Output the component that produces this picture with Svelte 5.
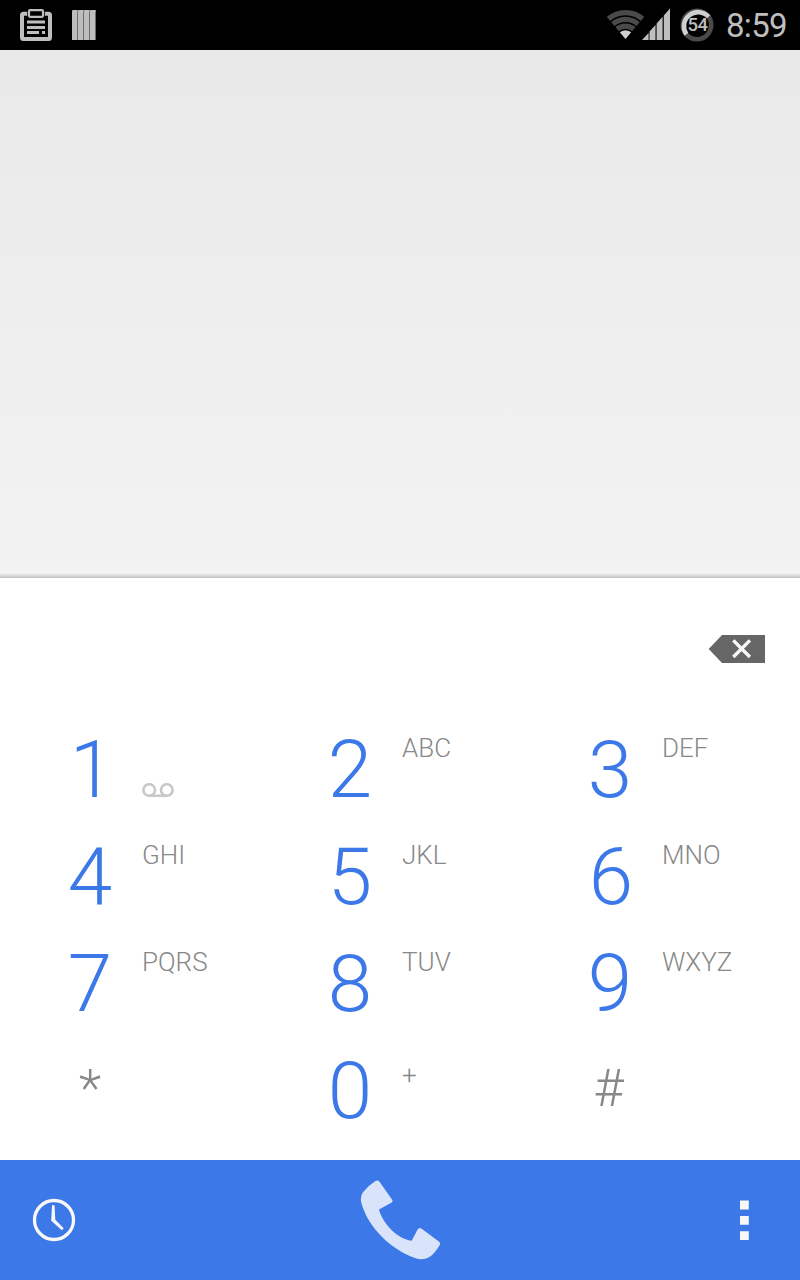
<script>
  const keys = [
    { digit: '1', voicemail: true, shift: 2 },
    { digit: '2', letters: 'ABC' },
    { digit: '3', letters: 'DEF' },
    { digit: '4', letters: 'GHI' },
    { digit: '5', letters: 'JKL' },
    { digit: '6', letters: 'MNO', shift: 1 },
    { digit: '7', letters: 'PQRS' },
    { digit: '8', letters: 'TUV' },
    { digit: '9', letters: 'WXYZ' },
    { digit: '*', symbol: true },
    { digit: '0', letters: '+', plus: true },
    { digit: '#', symbol: true, shift: -1.5 }
  ];
</script>

<div class="screen">
  <header class="status">
    <svg class="clipboard" width="32" height="33" viewBox="0 0 32 33" aria-hidden="true">
      <rect x="2" y="5.8" width="28" height="25.2" rx="1.5" fill="none" stroke="#bebebe" stroke-width="4" />
      <rect x="7.2" y="0" width="17.6" height="11" fill="#000" />
      <rect x="9" y="2.2" width="14" height="6.6" rx="1" fill="#000" stroke="#bebebe" stroke-width="2.2" />
      <path d="M7 14h18M7 19.5h18M7 24.5h12M22 24.5h3" stroke="#bebebe" stroke-width="2.8" />
    </svg>
    <svg class="books" width="24" height="31" viewBox="0 0 24 31" aria-hidden="true">
      {#each [0, 6, 12, 18] as x}
        <path d="M{x} 1.2q0-1.200 1-1.200h4q1 0 1 1.200v28.800h-6z" fill="#bebebe" />
        <path d="M{x + 5.5} 1.5v28.5" stroke="#6c6c6c" stroke-width="1" />
      {/each}
    </svg>
    <span class="spacer"></span>
    <svg class="wifi" width="40" height="30" viewBox="0 0 40 30" aria-hidden="true">
      <defs>
        <clipPath id="fan"><path d="M19.500 29L-5.500-.5h50z" /></clipPath>
      </defs>
      <g clip-path="url(#fan)" fill="none" stroke="#4a4a4a" stroke-width="5.2">
        <circle cx="19.5" cy="29" r="26.4" />
        <circle cx="19.5" cy="29" r="19.6" />
        <circle cx="19.5" cy="29" r="12.900" />
        <circle cx="19.5" cy="29" r="8.800" fill="#d0d0d0" stroke="none" />
      </g>
    </svg>
    <svg class="signal" width="28" height="32" viewBox="0 0 28 32" aria-hidden="true">
      <path d="M0 32l6.600-7v7zM7.500 32v-8.500l6-6.600V32zM14.600 32V15.600l6-6.800V32zM21.800 32V7.500L28 .4V32z" fill="#bebebe" />
    </svg>
    <div class="battery">
      <svg width="34" height="34" viewBox="0 0 34 34" aria-hidden="true">
        <circle cx="17" cy="17" r="14.2" fill="none" stroke="#4a4a4a" stroke-width="4.600" />
        <path d="M6.400 26.400A14.200 14.200 0 0 1 28.600 8.800" fill="none" stroke="#d0d0d0" stroke-width="4.600" />
      </svg>
      <span>54</span>
    </div>
    <time>8:59</time>
  </header>

  <main class="results"></main>

  <section class="dialer">
    <div class="number">
      <button aria-label="Backspace">
        <svg width="58" height="30" viewBox="0 0 58 30">
          <path d="M.7 15L14 .9H57V29H14z" fill="#666" />
          <path d="M25.300 6.400l16.600 16.600M41.900 6.400L25.300 23" stroke="#f8f8f8" stroke-width="3.400" />
        </svg>
      </button>
    </div>
    <div class="pad">
      {#each keys as key}
        <button class="key" class:symbol={key.symbol}>
          <span class="digit" style:text-indent="{(key.shift ?? 0) * 2}px">{key.digit}</span>
          {#if key.voicemail}
            <svg class="voicemail" width="32" height="15" viewBox="0 0 32 15" aria-hidden="true">
              <g fill="none" stroke="#c8c8c8" stroke-width="2.600">
                <circle cx="7.200" cy="7" r="5.800" />
                <circle cx="24.800" cy="7" r="5.800" />
                <path d="M7 12.800h18" />
              </g>
            </svg>
          {:else if key.letters}
            <span class="letters" class:plus={key.plus}>{key.letters}</span>
          {/if}
        </button>
      {/each}
    </div>
  </section>

  <footer class="actions">
    <button aria-label="Call history">
      <svg width="44" height="44" viewBox="0 0 44 44">
        <circle cx="22" cy="22" r="19.500" fill="none" stroke="#f8f8f8" stroke-width="3.300" />
        <path d="M20 7.500q1.300-.8 2.600 0l.7 14.200 8.400 8.600-1.800 2-10.700-9.600z" fill="#f8f8f8" />
      </svg>
    </button>
    <button aria-label="Call">
      <svg width="80" height="80" viewBox="0 0 80 80">
        <path d="M15.500 1.100Q17.700-.4 19.300 1.600L32 19.500Q33.400 21.700 31.300 22.800L19 29.500C22 42 36 58.500 51.700 60.800L57.600 49.600Q59 47.200 61.300 48.500L78.500 61.200Q81 63 79.600 65.200C76 71.500 71.500 76 68.500 77.500Q62.500 80.800 55 78C31 69.500 8.500 48 1.500 23.500Q-.4 16.500 3 12.200 8.300 5.600 15.500 1.100z" fill="#d9e4fb" />
      </svg>
    </button>
    <button aria-label="More options">
      <svg width="10" height="40" viewBox="0 0 10 40">
        <path d="M0 .5h8.800v9H0zM0 16h8.800v8.700H0zM0 31.200h8.800V40H0z" fill="#f8f8f8" />
      </svg>
    </button>
  </footer>
</div>

<style>
  :global(body) {
    margin: 0;
    background: #fff;
  }
  .screen {
    width: 800px;
    height: 1280px;
    display: flex;
    flex-direction: column;
    overflow: hidden;
    background: #fff;
    font-family: Roboto, sans-serif;
  }
  button {
    display: flex;
    margin: 0;
    padding: 0;
    border: 0;
    background: none;
    font: inherit;
    text-align: left;
  }
  svg {
    display: block;
    flex: none;
  }
  .status {
    height: 50px;
    flex: none;
    display: flex;
    align-items: flex-start;
    box-sizing: border-box;
    padding: 0 12px 0 20px;
    background: #000;
  }
  .clipboard {
    margin-top: 8px;
  }
  .books {
    margin: 10px 0 0 20px;
  }
  .spacer {
    flex: 1;
  }
  .wifi {
    margin-top: 10px;
  }
  .signal {
    margin: 8px 0 0 -4px;
  }
  .battery {
    display: grid;
    place-items: center;
    margin: 7.5px 12px 0 10px;
  }
  .battery > * {
    grid-area: 1 / 1;
  }
  .battery span {
    padding-left: 1px;
    font-size: 18.5px;
    line-height: 18px;
    letter-spacing: -0.5px;
    font-weight: 500;
    color: #bebebe;
  }
  time {
    width: 62px;
    font-size: 33px;
    line-height: 50px;
    padding-top: 1px;
    height: 49px;
    letter-spacing: -0.7px;
    color: #bebebe;
    white-space: nowrap;
  }
  .results {
    height: 528px;
    flex: none;
    background:
      linear-gradient(#c8c8c800, #c0c0c0) bottom / 100% 5px no-repeat,
      linear-gradient(#e9e9e9, #f3f3f3);
  }
  .dialer {
    height: 582px;
    flex: none;
  }
  .number {
    height: 138px;
    display: flex;
    justify-content: flex-end;
    align-items: flex-start;
    box-sizing: border-box;
    padding: 56px 34px 0;
  }
  .pad {
    display: grid;
    grid-template-columns: repeat(3, 260px);
    grid-auto-rows: 107px;
    padding-left: 10px;
  }
  .key {
    align-items: flex-start;
    padding-left: 28px;
  }
  .digit {
    width: 104px;
    text-align: center;
    font-size: 80px;
    line-height: 108px;
    font-weight: 300;
    color: #3c78e7;
  }
  .symbol .digit {
    padding-top: 21px;
    font-size: 52px;
    line-height: 61px;
    color: #888;
  }
  .letters {
    padding-top: 17px;
    font-size: 26px;
    line-height: 30px;
    font-weight: 300;
    color: #888;
  }
  .plus {
    padding-top: 23px;
  }
  .voicemail {
    margin-top: 67px;
  }
  .actions {
    height: 120px;
    flex: none;
    display: grid;
    grid-template-columns: 1fr auto 1fr;
    align-items: center;
    box-sizing: border-box;
    padding: 0 31px 0 30px;
    background: #3c78e7;
  }
  .actions button:first-child {
    margin-left: 2px;
  }
  .actions button:last-child {
    justify-self: end;
    margin-right: 19px;
  }
</style>
